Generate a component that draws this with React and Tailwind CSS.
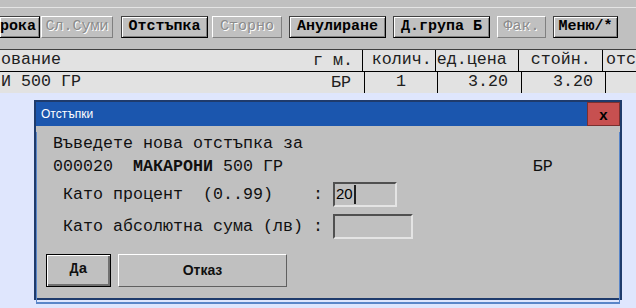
import React from "react";

const mono = { fontFamily: '"Liberation Mono", "Courier New", monospace' };
const sans = { fontFamily: '"Liberation Sans", Arial, sans-serif' };

function ToolButton({ label, w, ml, disabled, first }) {
  return (
    <div
      className={
        (disabled
          ? "flex h-[22px] items-center border border-t-white border-l-white border-r-[#808080] border-b-[#808080] text-[15px] text-[#8c8c8c] [text-shadow:1px_1px_0_#ffffff]"
          : "flex h-[22px] items-center border border-t-[#404040] border-l-[#404040] border-r-black border-b-black text-[15px] font-bold text-black shadow-[inset_1px_1px_0_#ffffff,inset_-1px_-1px_0_#808080]") +
        (first ? " border-l-0 pr-[3px]" : " justify-center")
      }
      style={{ ...mono, width: w, marginLeft: ml }}
    >
      {label}
    </div>
  );
}

export default function App() {
  const buttons = [
    { label: "рока", ml: 0, first: true },
    { label: "Сл.Суми", w: 72, ml: 1, disabled: true },
    { label: "Отстъпка", w: 87, ml: 8 },
    { label: "Сторно", w: 70, ml: 4, disabled: true },
    { label: "Анулиране", w: 97, ml: 7 },
    { label: "Д.група Б", w: 97, ml: 7 },
    { label: "Фак.", w: 49, ml: 7, disabled: true },
    { label: "Меню/*", w: 65, ml: 7 },
  ];

  return (
    <div className="relative h-[308px] w-[636px] overflow-hidden bg-[#dfe6fd]" style={mono}>
      {/* toolbar */}
      <div className="h-[49px] bg-[#c0c0c0]">
        <div className="h-[7px]" />
        <div className="h-px bg-[#e4e4e4]" />
        <div className="mt-[8px] flex">
          {buttons.map((b) => (
            <ToolButton key={b.label} {...b} />
          ))}
        </div>
      </div>

      {/* table */}
      <div className="border-t border-[#404040] bg-[#e2e2e2] text-[16.67px] text-[#202020]">
        <div className="flex h-[22px] items-center border-b border-black leading-none">
          <div className="w-[364px] pl-px">ование</div>
          <div className="flex h-full w-[73px] items-center justify-end border-l border-black pr-[3px]">колич.</div>
          <div className="flex h-full w-[84px] items-center justify-start border-l border-black pl-px">ед.цена</div>
          <div className="flex h-full w-[84px] items-center justify-center border-l border-black">стойн.</div>
          <div className="flex h-full flex-1 items-center border-l border-black pl-[3px]">отс</div>
        </div>
        <div className="flex h-[21px] items-center leading-none">
          <div className="w-[364px] pl-px">И 500 ГР</div>
          <div className="flex h-full w-[73px] items-center justify-center border-l border-black">1</div>
          <div className="flex h-full w-[84px] items-center justify-end border-l border-black pr-[13px]">3.20</div>
          <div className="flex h-full w-[84px] items-center justify-end border-l border-black pr-[12px]">3.20</div>
          <div className="flex h-full flex-1 items-center border-l border-black" />
        </div>
        <div className="absolute left-[313px] top-[50px] text-[16.67px] leading-[21px] text-[#202020]">г м.</div>
        <div className="absolute left-[331px] top-[72px] text-[16.67px] leading-[21px] text-[#202020]">БР</div>
      </div>

      {/* dialog */}
      <div className="absolute left-[34px] top-[100px] h-[200px] w-[588px] border-2 border-[#1f3b6c] bg-[#c0c0c0]">
        <div className="flex h-[24px] items-center justify-between bg-[#1b56ae]">
          <span className="pl-[5px] text-[12px] text-white" style={sans}>Отстъпки</span>
          <div className="flex h-full w-[33px] items-center justify-center border border-[#7a3030] bg-[#c75050] text-[15px] font-bold leading-none text-black" style={sans}>
            x
          </div>
        </div>
        <div className="h-[172px] border-x border-b-2 border-[#5a86c8] pl-[16px] text-[16.67px] text-[#101010]">
          <div className="mt-[6px] h-[23px] whitespace-pre leading-[23px]">Въведете нова отстъпка за</div>
          <div className="h-[23px] whitespace-pre leading-[23px]">
            000020  <span className="font-semibold">МАКАРОНИ</span> 500 ГР                         БР
          </div>
          <div className="mt-[4px] flex h-[25px] items-center">
            <span className="w-[280px] whitespace-pre"> Като процент  (0..99)    :</span>
            <div className="flex h-[25px] w-[64px] items-center border-2 border-t-[#505050] border-l-[#505050] border-r-[#e4e4e4] border-b-[#e4e4e4] bg-[#c0c0c0] pl-[1px] text-[15px] text-black" style={sans}>
              20<span className="ml-px h-[19px] w-[2px] bg-[#202020]" />
            </div>
          </div>
          <div className="mt-[7px] flex h-[25px] items-center">
            <span className="w-[280px] whitespace-pre"> Като абсолютна сума (лв) :</span>
            <div className="h-[25px] w-[80px] border-2 border-t-[#505050] border-l-[#505050] border-r-[#e4e4e4] border-b-[#e4e4e4]" />
          </div>
          <div className="ml-[-7px] mt-[15px] flex gap-[7px]">
            <div className="flex h-[33px] w-[65px] items-center justify-center border border-black text-[15px] font-bold shadow-[inset_1px_1px_0_#ffffff,inset_-2px_-2px_0_#707070]">
              Да
            </div>
            <div className="flex h-[33px] w-[169px] items-center justify-center border border-t-white border-l-white border-r-[#606060] border-b-[#606060] text-[14px] font-bold" style={sans}>
              Отказ
            </div>
          </div>
        </div>
      </div>
    </div>
  );
}
